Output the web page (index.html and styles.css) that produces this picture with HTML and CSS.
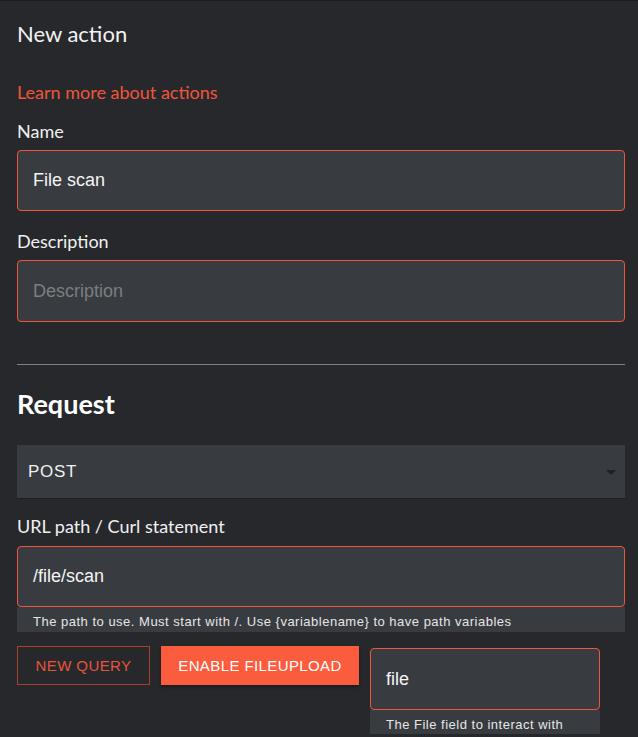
FILE: index.html
```html
<!DOCTYPE html>
<html>
<head>
<meta charset="utf-8">
<link rel="stylesheet" href="styles.css">
</head>
<body>
<div class="panel">
  <h2 class="title">New action</h2>
  <a class="learn">Learn more about actions</a>
  <div class="label label-name">Name</div>
  <div class="field field-name"><span class="value">File scan</span></div>
  <div class="label label-desc">Description</div>
  <div class="field field-desc"><span class="placeholder">Description</span></div>
  <hr class="divider">
  <h3 class="section">Request</h3>
  <div class="select">
    <span class="select-value">POST</span>
    <svg class="caret" width="10" height="5" viewBox="0 0 10 5"><path d="M0 0h10L5 5z" fill="#1f2023"/></svg>
  </div>
  <div class="label label-url">URL path / Curl statement</div>
  <div class="field-wrap url-wrap">
    <div class="field"><span class="value">/file/scan</span></div>
    <div class="helper">The path to use. Must start with /. Use {variablename} to have path variables</div>
  </div>
  <div class="actions">
    <button class="btn btn-outline">NEW QUERY</button>
    <button class="btn btn-filled">ENABLE FILEUPLOAD</button>
    <div class="field-wrap file-wrap">
      <div class="field file-field"><span class="value">file</span></div>
      <div class="helper">The File field to interact with</div>
    </div>
  </div>
</div>
</body>
</html>
```

FILE: styles.css
```css
html, body {
  margin: 0;
  padding: 0;
  background: #27282c;
}
body {
  width: 638px;
  height: 737px;
  overflow: hidden;
  border-top: 1px solid #1c1d20;
  box-sizing: border-box;
}
.panel {
  padding: 0 13px 0 17px;
  color: #f0f0f0;
  font-family: Lato, "Open Sans", sans-serif;
}
.title {
  margin: 19px 0 0;
  font-size: 22px;
  font-weight: 400;
  line-height: 28px;
  color: #f2f2f2;
}
.learn {
  display: block;
  margin-top: 33px;
  font-size: 18px;
  line-height: 22px;
  color: #f0553a;
}
.label {
  font-size: 18px;
  line-height: 22px;
  color: #f0f0f0;
}
.label-name { margin-top: 17px; }
.label-desc { margin-top: 19px; }
.label-url { margin-top: 16px; }
.field {
  box-sizing: border-box;
  height: 61px;
  margin-top: 8px;
  background: #383b40;
  border: 1px solid #f0553a;
  border-radius: 4px;
  display: flex;
  align-items: center;
  padding: 0 15px;
  font-family: "Liberation Sans", Arial, sans-serif;
  font-size: 18px;
}
.field-desc { height: 62px; }
.value { color: #f4f4f4; }
.placeholder { color: #7b7e83; }
.divider {
  margin: 42px 0 0;
  border: 0;
  border-top: 1px solid #808083;
  height: 0;
}
.section {
  margin: 23px 0 0;
  font-size: 27px;
  font-weight: 700;
  line-height: 32px;
  color: #ffffff;
}
.select {
  margin-top: 25px;
  height: 54px;
  box-sizing: border-box;
  background: #383b40;
  border-bottom: 1px solid #1f2023;
  display: flex;
  align-items: center;
  justify-content: space-between;
  padding: 0 9px 0 11px;
  font-family: "Liberation Sans", Arial, sans-serif;
  font-size: 17px;
  color: #f0f0f0;
  letter-spacing: 0.7px;
}
.caret { margin-top: 2px; }
.field-wrap { display: flex; flex-direction: column; }
.field-wrap .field { margin-top: 0; }
.url-wrap { margin-top: 9px; }
.url-wrap .field { height: 61px; }
.helper {
  background: #383b40;
  height: 25px;
  padding: 7px 0 0 16px;
  box-sizing: border-box;
  font-family: "Liberation Sans", Arial, sans-serif;
  font-size: 13px;
  line-height: 16px;
  letter-spacing: 0.5px;
  color: #e6e6e6;
  white-space: nowrap;
  overflow: hidden;
}
.actions {
  display: flex;
  align-items: flex-start;
  margin-top: 14px;
}
.btn {
  height: 39px;
  box-sizing: border-box;
  font-family: "Liberation Sans", Arial, sans-serif;
  font-size: 15px;
  letter-spacing: 0.4px;
  padding: 0;
  border-radius: 0;
  cursor: pointer;
}
.btn-outline {
  width: 133px;
  background: transparent;
  border: 1px solid #a9402f;
  color: #e8533a;
}
.btn-filled {
  width: 198px;
  margin-left: 11px;
  background: #fc5c3e;
  border: 0;
  color: #ffffff;
  box-shadow: 0 2px 3px rgba(0,0,0,0.35);
}
.file-wrap {
  width: 230px;
  margin-left: 11px;
  margin-top: 2px;
}
.file-field { height: 62px; }
.file-wrap .helper { height: 24px; }
```
